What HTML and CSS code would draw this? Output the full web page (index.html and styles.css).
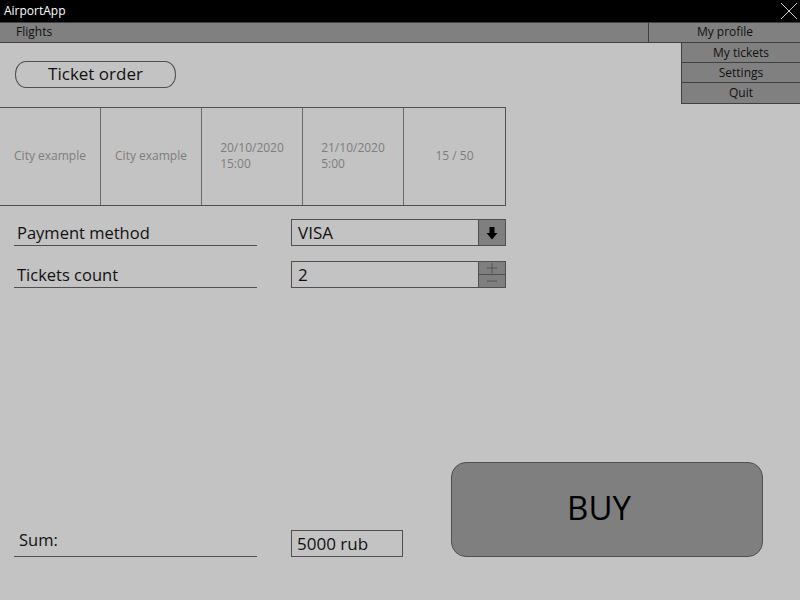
FILE: index.html
```html
<!DOCTYPE html>
<html>
<head>
<meta charset="utf-8">
<link rel="stylesheet" href="styles.css">
</head>
<body>
<div class="app">
  <header class="titlebar">
    <span class="title">AirportApp</span>
    <svg class="close" width="18" height="18" viewBox="0 0 18 18"><path d="M1 1 L17 17 M17 1 L1 17" stroke="#d0d0d0" stroke-width="1" fill="none"/></svg>
  </header>
  <nav class="menubar">
    <div class="menu-left">Flights</div>
    <div class="menu-right">My profile</div>
    <ul class="dropdown">
      <li>My tickets</li>
      <li>Settings</li>
      <li>Quit</li>
    </ul>
  </nav>
  <main class="content">
    <div class="pill">Ticket order</div>
    <div class="flight">
      <div class="cell">City example</div>
      <div class="cell">City example</div>
      <div class="cell"><div class="stack"><div>20/10/2020</div><div>15:00</div></div></div>
      <div class="cell"><div class="stack"><div>21/10/2020</div><div>5:00</div></div></div>
      <div class="cell">15 / 50</div>
    </div>
    <div class="row first">
      <div class="label">Payment method</div>
      <div class="field combo">
        <span class="value">VISA</span>
        <span class="btn arrow"><svg width="12" height="14" viewBox="0 0 12 14"><path d="M3.5 1 H8.5 V7 H11.5 L6 13.5 L0.5 7 H3.5 Z" fill="#000"/></svg></span>
      </div>
    </div>
    <div class="row second">
      <div class="label">Tickets count</div>
      <div class="field combo">
        <span class="value">2</span>
        <span class="spin">
          <span class="spin-btn"><svg width="12" height="12" viewBox="0 0 12 12"><path d="M1 6 H11 M6 1 V11" stroke="#555" stroke-width="1"/></svg></span>
          <span class="spin-btn"><svg width="12" height="12" viewBox="0 0 12 12"><path d="M1 6 H11" stroke="#555" stroke-width="1"/></svg></span>
        </span>
      </div>
    </div>
    <div class="bottom">
      <div class="sum-row">
        <div class="label sum">Sum:</div>
        <div class="field total">5000 rub</div>
      </div>
      <button class="buy">BUY</button>
    </div>
  </main>
</div>
</body>
</html>
```

FILE: styles.css
```css
* { box-sizing: border-box; margin: 0; padding: 0; }
html, body { width: 800px; height: 600px; overflow: hidden; }
body {
  background: #c3c3c3;
  font-family: "Open Sans", "Noto Sans", sans-serif;
  color: #000;
}
.app { position: relative; width: 800px; height: 600px; display: flex; flex-direction: column; }
.titlebar {
  height: 22px;
  background: #000;
  color: #fff;
  display: flex;
  align-items: center;
  justify-content: space-between;
  padding-left: 4px;
  padding-right: 2px;
  font-size: 12px;
}
.title { line-height: 20px; }
.close { display: block; margin-top: -1px; }
.menubar {
  position: relative;
  height: 21px;
  background: #808080;
  border-top: 1px solid #404040;
  border-bottom: 1px solid #404040;
  display: flex;
  font-size: 12px;
  color: #111;
}
.menu-left { flex: 1; padding-left: 16px; line-height: 18px; }
.menu-right {
  width: 152px;
  border-left: 1px solid #404040;
  text-align: center;
  line-height: 18px;
  padding-left: 1px;
}
.dropdown {
  position: absolute;
  top: 20px;
  right: 0;
  width: 119px;
  list-style: none;
  background: #808080;
  border-left: 1px solid #404040;
  border-bottom: 1px solid #404040;
}
.dropdown li {
  height: 20px;
  line-height: 20px;
  text-align: center;
  border-bottom: 1px solid #404040;
}
.dropdown li:last-child { border-bottom: none; }
.content { flex: 1; display: flex; flex-direction: column; }
.pill {
  margin: 18px 0 0 15px;
  width: 161px;
  height: 27px;
  border: 1px solid #505050;
  border-radius: 11px / 13px;
  text-align: center;
  font-size: 17px;
  line-height: 24px;
  color: #111;
}
.flight {
  margin-top: 19px;
  width: 506px;
  height: 99px;
  border-top: 1px solid #505050;
  border-bottom: 1px solid #505050;
  display: grid;
  grid-template-columns: 101px 101px 101px 101px 102px;
  font-size: 12px;
  color: #7d7d7d;
}
.cell {
  border-right: 1px solid #6a6a6a;
  display: flex;
  align-items: center;
  justify-content: center;
  line-height: 16px;
  padding-bottom: 2px;
}
.cell:last-child { border-right: 1px solid #505050; }
.stack { text-align: left; }
.row { display: flex; align-items: flex-end; height: 27px; }
.row.first { margin-top: 13px; }
.row.second { margin-top: 15px; }
.label {
  margin-left: 14px;
  width: 243px;
  border-bottom: 1px solid #505050;
  padding-left: 3px;
  font-size: 16.5px;
  line-height: 25px;
  color: #111;
}
.field {
  margin-left: 34px;
  border: 1px solid #505050;
  height: 27px;
  font-size: 17px;
  color: #111;
}
.combo { width: 215px; display: flex; }
.value { flex: 1; padding-left: 6px; line-height: 25px; }
.btn {
  width: 27px;
  border-left: 1px solid #505050;
  background: #7f7f7f;
  display: flex;
  align-items: center;
  justify-content: center;
}
.spin {
  width: 27px;
  border-left: 1px solid #505050;
  display: flex;
  flex-direction: column;
}
.spin-btn {
  flex: 1;
  background: #7f7f7f;
  display: flex;
  align-items: center;
  justify-content: center;
}
.spin-btn + .spin-btn { border-top: 1px solid #505050; }
.bottom {
  margin-top: auto;
  margin-bottom: 43px;
  display: flex;
  align-items: flex-end;
}
.sum-row { display: flex; align-items: flex-end; }
.sum { padding-left: 5px; line-height: 24px; padding-bottom: 4px; }
.total {
  width: 112px;
  padding-left: 5px;
  line-height: 25px;
}
.buy {
  margin-left: 48px;
  width: 312px;
  height: 95px;
  background: #7f7f7f;
  border: 1px solid #505050;
  border-radius: 15px;
  font-family: "Open Sans", "Noto Sans", sans-serif;
  font-size: 33px;
  line-height: 40px;
  padding-bottom: 4px;
  padding-right: 16px;
  color: #000;
}
```
